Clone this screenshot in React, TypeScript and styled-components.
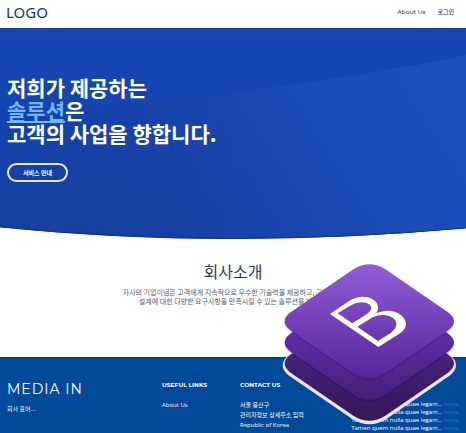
import React from 'react';
import styled, { createGlobalStyle } from 'styled-components';

const GlobalStyle = createGlobalStyle`
  * { box-sizing: border-box; }
  body { margin: 0; background: #fff; font-family: "Open Sans", "Noto Sans CJK KR", sans-serif; }
  h1, h2, h3, p, ul, address { margin: 0; padding: 0; font-style: normal; }
  a { color: inherit; text-decoration: none; }
`;

const Page = styled.div`
  position: relative;
  display: flex;
  flex-direction: column;
  height: 100vh;
  overflow: hidden;
`;

const Header = styled.header`
  display: flex;
  flex: none;
  justify-content: space-between;
  align-items: center;
  height: 28px;
  padding: 0 12px 5px 6px;
  color: #0b4595;
`;

const Brand = styled.a`
  font-size: 15px;
  font-family: "Noto Sans", sans-serif;
  line-height: 20px;
  color: #0b3678;
`;

const Nav = styled.nav`
  display: flex;
  gap: 12px;
  font: 6px/12px Montserrat, "Open Sans", "Noto Sans CJK KR", sans-serif;
  font-weight: 500;
`;

const Hero = styled.section`
  position: relative;
  flex: none;
  height: 211px;
  padding: 48px 7px 0;
  color: #fff;
`;

const HeroArt = styled.svg`
  position: absolute;
  inset: 0;
  width: 100%;
  height: 100%;
`;

const HeroBody = styled.div`
  position: relative;
`;

const Headline = styled.h1`
  font: 700 21px/23px "Noto Sans CJK KR", sans-serif;
`;

const Highlight = styled.span`
  color: #74b5fc;
  text-decoration: underline;
`;

const HeroButton = styled.button`
  display: block;
  width: 61px;
  height: 19px;
  margin-top: 18px;
  padding: 0;
  border: 2px solid #e4eaf8;
  border-radius: 10px;
  background: transparent;
  color: #fff;
  font: 700 6px/14px "Noto Sans CJK KR", sans-serif;
`;

const About = styled.section`
  flex: none;
  height: 118px;
  padding-top: 20px;
  text-align: center;
  color: #536170;
`;

const AboutTitle = styled.h2`
  font: 400 16px/24px "Noto Sans CJK KR", sans-serif;
  color: #283d50;
`;

const AboutText = styled.p`
  margin-top: 5px;
  font: 7px/9px "Noto Sans CJK KR", sans-serif;
`;

const Footer = styled.footer`
  display: grid;
  grid-template-columns: 155px 78px 1fr 1fr;
  flex: 1;
  min-height: 0;
  padding: 22px 7px 0 7px;
  border-top: 1px solid #003c8c;
  background: #004a99;
  color: #fff;
  font-size: 6px;
  line-height: 10px;
`;

const FooterBrand = styled.h3`
  font: 400 14px/18px Montserrat, "Open Sans", sans-serif;
  letter-spacing: 1px;
`;

const FooterNote = styled.p`
  margin-top: 6px;
`;

const FooterTitle = styled.h3`
  margin-bottom: 10px;
  font: 700 6px/10px Montserrat, "Open Sans", sans-serif;
`;

const LinkList = styled.ul`
  list-style: none;
`;

const NewsList = styled.ul`
  padding-top: 20px;
  list-style: none;
  text-align: right;
  white-space: nowrap;
  line-height: 8px;
`;

const MoreLink = styled.a`
  color: #007bff;
`;

const StackLogo = styled.svg`
  position: absolute;
  right: 6px;
  bottom: 6px;
  width: 180px;
  height: 167px;
`;

const tile =
  'M250 58 Q298 28 346 58 L533 186 Q571 213 533 242 L346 370 Q298 400 250 370 L63 242 Q25 213 63 186 Z';

const letterB =
  'M15 72 L68 36 C92 18 124 14 146 30 C160 40 163 54 154 70 C180 58 210 60 228 75 C250 95 247 116 222 132 L160 171 Z ' +
  'M38 70 L82 100 L120 76 C140 64 144 52 132 43 C120 34 98 34 78 46 Z ' +
  'M97 110 L159 153 L198 128 C216 114 220 98 205 85 C190 73 165 71 143 82 Z';

const news = [1, 2, 3, 4];

export default function App() {
  return (
    <Page>
      <GlobalStyle />
      <Header>
        <Brand href="#">LOGO</Brand>
        <Nav>
          <a href="#about">About Us</a>
          <a href="#login">로그인</a>
        </Nav>
      </Header>
      <Hero>
        <HeroArt viewBox="0 0 466 211" preserveAspectRatio="none" aria-hidden="true">
          <defs>
            <linearGradient id="sweep" gradientUnits="userSpaceOnUse" x1="120" y1="200" x2="400" y2="20">
              <stop offset="0" stopColor="#173f9f" />
              <stop offset="1" stopColor="#1b4fbe" />
            </linearGradient>
            <linearGradient id="base" gradientUnits="userSpaceOnUse" x1="0" y1="12" x2="0" y2="200">
              <stop offset="0" stopColor="#1445b2" />
              <stop offset="0.4" stopColor="#1544b0" />
              <stop offset="1" stopColor="#173f9f" />
            </linearGradient>
            <linearGradient id="sweepFade" gradientUnits="userSpaceOnUse" x1="0" y1="0" x2="240" y2="0">
              <stop offset="0" stopColor="#fff" stopOpacity="0.1" />
              <stop offset="1" stopColor="#fff" />
            </linearGradient>
            <mask id="sweepMask">
              <path d="M0 0H466V211H0Z" fill="url(#sweepFade)" />
            </mask>
            <linearGradient id="shade" x1="0" y1="0" x2="0" y2="1">
              <stop offset="0" stopColor="#1f48a6" />
              <stop offset="1" stopColor="#1445b2" />
            </linearGradient>
          </defs>
          <path d="M0 0H466V200Q350 211 233 211Q110 211 0 199Z" fill="url(#base)" />
          <path d="M0 0H466V12H0Z" fill="url(#shade)" />
          <path d="M0 84Q260 70 466 27V200Q350 211 233 211Q110 211 0 199Z" fill="url(#sweep)" mask="url(#sweepMask)" />
          <path d="M0 199Q110 210 233 210Q350 210 466 200" fill="none" stroke="#0a349b" />
          <path d="M0 0H466" stroke="#0834a0" />
        </HeroArt>
        <HeroBody>
          <Headline>
            저희가 제공하는<br />
            <Highlight>솔루션</Highlight>은<br />
            고객의 사업을 향합니다.
          </Headline>
          <HeroButton type="button">서비스 안내</HeroButton>
        </HeroBody>
      </Hero>
      <About id="about">
        <AboutTitle>회사소개</AboutTitle>
        <AboutText>
          자사의 기업이념은 고객에게 지속적으로 우수한 기술력을 제공하고, 고객의 망<br />
          설계에 대한 다양한 요구사항을 만족시킬 수 있는 솔루션을 제공함.
        </AboutText>
      </About>
      <Footer>
        <div>
          <FooterBrand>MEDIA IN</FooterBrand>
          <FooterNote>회사 표어...</FooterNote>
        </div>
        <div>
          <FooterTitle>USEFUL LINKS</FooterTitle>
          <LinkList><li><a href="#about">About Us</a></li></LinkList>
        </div>
        <div>
          <FooterTitle>CONTACT US</FooterTitle>
          <address>
            서울 용산구<br />
            관리자정보 상세주소 입력<br />
            Republic of Korea
          </address>
        </div>
        <NewsList>
          {news.map((id) => (
            <li key={id}>Tamen quem nulla quae legam... <MoreLink href="#news">more</MoreLink></li>
          ))}
        </NewsList>
      </Footer>
      <StackLogo viewBox="30 30 540 501" role="img" aria-label="Bootstrap">
        <defs>
          <linearGradient id="top" x1="0" y1="0" x2="0" y2="1">
            <stop offset="0" stopColor="#915dd8" />
            <stop offset="1" stopColor="#56249a" />
          </linearGradient>
          <linearGradient id="middle" x1="0" y1="0" x2="0" y2="1">
            <stop offset="0.3" stopColor="#642db0" />
            <stop offset="1" stopColor="#452078" />
          </linearGradient>
          <linearGradient id="bottom" x1="0" y1="0" x2="0" y2="1">
            <stop offset="0.3" stopColor="#4b2285" />
            <stop offset="1" stopColor="#351855" />
          </linearGradient>
        </defs>
        <path d={tile} transform="translate(0 132)" fill="#e7e5e7" stroke="#e7e5e7" strokeWidth="12" />
        <path d={tile} transform="translate(0 127)" fill="url(#bottom)" />
        <path d={tile} transform="translate(0 70)" fill="#000" fillOpacity="0.14" />
        <path d={tile} transform="translate(0 64)" fill="url(#middle)" />
        <path d={tile} transform="translate(0 6)" fill="#000" fillOpacity="0.14" />
        <path d={tile} fill="url(#top)" />
        <path d={letterB} transform="translate(165 120)" fill="#fff" fillRule="evenodd" />
      </StackLogo>
    </Page>
  );
}
